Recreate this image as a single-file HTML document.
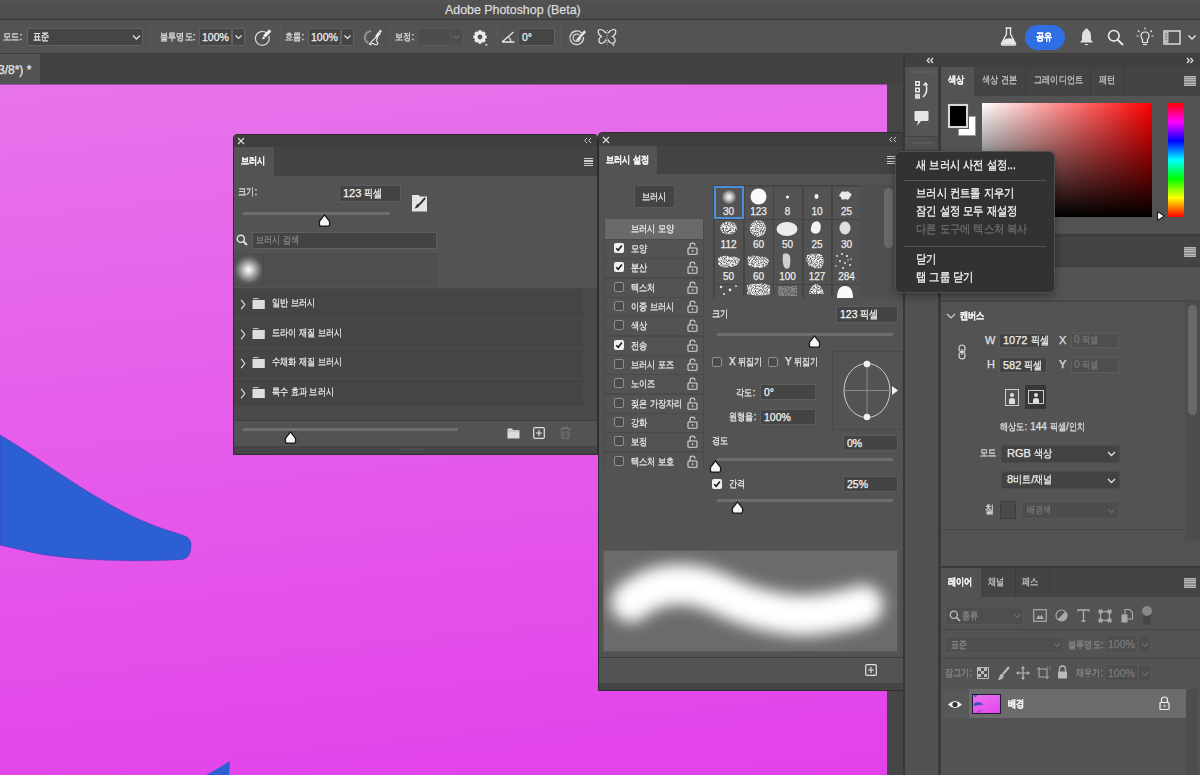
<!DOCTYPE html>
<html><head><meta charset="utf-8">
<style>
*{box-sizing:border-box;margin:0;padding:0}
html,body{width:1200px;height:775px;overflow:hidden;background:#424242;font-family:"Liberation Sans",sans-serif;color:#e6e6e6;font-size:11px}
.a{position:absolute}
.t{position:absolute;white-space:nowrap;line-height:1;-webkit-text-stroke:0.25px currentColor}
svg{position:absolute;overflow:visible}
i{font-style:normal;display:inline-block;transform:scaleX(0.82);transform-origin:0 50%;-webkit-text-stroke:0.25px currentColor}
.inp{position:absolute;background:#454545;border:1px solid #626262;border-radius:2px}
.sep{position:absolute;width:1px;background:#464646;border-right:1px solid #5a5a5a}
</style></head><body>
<!-- title bar -->
<div class="a" style="left:0;top:0;width:1200px;height:20px;background:linear-gradient(#535353,#4b4b4b)"></div>
<div class="t" style="left:445px;top:4px;font-size:12.4px;color:#dcdcdc">Adobe Photoshop (Beta)</div>
<div class="a" style="left:0;top:19px;width:1200px;height:1px;background:#3a3a3a"></div>
<!-- options bar -->
<div class="a" style="left:0;top:20px;width:1200px;height:34px;background:#535353"></div>
<div class="a" style="left:0;top:53px;width:1200px;height:1px;background:#3c3c3c"></div>
<div class="t" style="left:3px;top:32px;font-size:10px;color:#e0e0e0"><i style="margin-right:-3.60px">모드</i>:</div>
<div class="inp" style="left:27px;top:28px;width:116px;height:18px"></div>
<div class="t" style="left:33px;top:32px;font-size:10px;color:#f0f0f0"><i style="margin-right:-3.60px">표준</i></div>
<svg style="left:132px;top:34px" width="9" height="7" viewBox="0 0 9 7"><path d="M1 1.5 L4.5 5 L8 1.5" fill="none" stroke="#e0e0e0" stroke-width="1.3"/></svg>
<div class="sep" style="left:150px;top:24px;height:26px"></div>
<div class="t" style="left:160px;top:32px;font-size:10px;color:#e0e0e0"><i style="margin-right:-7.20px">불투명도</i>:</div>
<div class="inp" style="left:199px;top:28px;width:33px;height:18px"></div>
<div class="inp" style="left:232px;top:28px;width:13px;height:18px"></div>
<div class="t" style="left:202px;top:32px;font-size:10.5px;color:#f0f0f0">100%</div>
<svg style="left:234px;top:34px" width="9" height="7" viewBox="0 0 9 7"><path d="M1.5 1.5 L4.5 4.5 L7.5 1.5" fill="none" stroke="#e0e0e0" stroke-width="1.2"/></svg>
<svg style="left:254px;top:28px" width="20" height="20" viewBox="0 0 20 20"><path d="M12.4 4.8 A6.9 6.9 0 1 0 14.8 8" fill="none" stroke="#d4d4d4" stroke-width="1.25"/><path d="M10.2 8.6 L16.3 2.4" stroke="#f0f0f0" stroke-width="3"/><path d="M9 8.2 L11.2 10.4 L8.2 11.4 Z" fill="#f0f0f0"/></svg>
<div class="sep" style="left:280px;top:24px;height:26px"></div>
<div class="t" style="left:285px;top:32px;font-size:10px;color:#e0e0e0"><i style="margin-right:-3.60px">흐름</i>:</div>
<div class="inp" style="left:308px;top:28px;width:33px;height:18px"></div>
<div class="inp" style="left:341px;top:28px;width:13px;height:18px"></div>
<div class="t" style="left:311px;top:32px;font-size:10.5px;color:#f0f0f0">100%</div>
<svg style="left:343px;top:34px" width="9" height="7" viewBox="0 0 9 7"><path d="M1.5 1.5 L4.5 4.5 L7.5 1.5" fill="none" stroke="#e0e0e0" stroke-width="1.2"/></svg>
<svg style="left:362px;top:28px" width="22" height="20" viewBox="0 0 22 20"><path d="M8.3 3.2 Q3.2 4.6 2.8 9.3 Q2.8 12.8 5.6 14.6" fill="none" stroke="#8e8e8e" stroke-width="2.2" stroke-linecap="round"/><circle cx="18.3" cy="3.4" r="1.3" fill="#eee"/><path d="M17.6 4.6 L14.3 8.9" stroke="#eee" stroke-width="3"/><path d="M14.5 8.6 L7.6 15.6 Q7 16.8 8.6 16.6 L10.6 15.2 L13 16.6 Q15 17.1 16 15.6 L14.2 12.3 L15.5 10.5 Z" fill="none" stroke="#eee" stroke-width="1.1" stroke-linejoin="round"/></svg>
<div class="sep" style="left:390px;top:24px;height:26px"></div>
<div class="t" style="left:395px;top:32px;font-size:10px;color:#e0e0e0"><i style="margin-right:-3.60px">보정</i>:</div>
<div class="inp" style="left:417px;top:28px;width:46px;height:18px;background:#4d4d4d;border-color:#575757"></div>
<div class="a" style="left:450px;top:29px;width:1px;height:16px;background:#575757"></div>
<svg style="left:452px;top:34px" width="9" height="7" viewBox="0 0 9 7"><path d="M1.5 1.5 L4.5 4.5 L7.5 1.5" fill="none" stroke="#6a6a6a" stroke-width="1.2"/></svg>
<svg style="left:472px;top:29px" width="18" height="18" viewBox="0 0 18 18"><path d="M14.64 6.52 L14.64 9.48 L12.57 10.04 L12.67 9.79 L13.74 11.64 L11.64 13.74 L9.79 12.67 L10.04 12.57 L9.48 14.64 L6.52 14.64 L5.96 12.57 L6.21 12.67 L4.36 13.74 L2.26 11.64 L3.33 9.79 L3.43 10.04 L1.36 9.48 L1.36 6.52 L3.43 5.96 L3.33 6.21 L2.26 4.36 L4.36 2.26 L6.21 3.33 L5.96 3.43 L6.52 1.36 L9.48 1.36 L10.04 3.43 L9.79 3.33 L11.64 2.26 L13.74 4.36 L12.67 6.21 L12.57 5.96 Z M8 5.6 A2.4 2.4 0 1 0 8 10.4 A2.4 2.4 0 1 0 8 5.6 Z" fill="#ececec" fill-rule="evenodd"/><path d="M12.5 15.2 L16 15.2 L14.25 17 Z" fill="#e8e8e8"/></svg>
<div class="sep" style="left:497px;top:24px;height:26px"></div>
<svg style="left:501px;top:31px" width="15" height="12" viewBox="0 0 15 12"><path d="M1 11 H13.5 M1 11 L12.5 1" fill="none" stroke="#e8e8e8" stroke-width="1.3"/><path d="M7.5 5.8 Q10 8 10.2 11" fill="none" stroke="#e8e8e8" stroke-width="1.1"/></svg>
<div class="inp" style="left:518px;top:28px;width:37px;height:18px"></div>
<div class="t" style="left:522px;top:32px;font-size:10.5px;color:#f0f0f0">0°</div>
<div class="sep" style="left:560px;top:24px;height:26px"></div>
<svg style="left:568px;top:28px" width="20" height="20" viewBox="0 0 20 20"><path d="M13.8 5.2 A6.8 6.8 0 1 0 15.5 9" fill="none" stroke="#d8d8d8" stroke-width="1.3"/><path d="M11.5 7.3 A3.7 3.7 0 1 0 12.4 9.8" fill="none" stroke="#d8d8d8" stroke-width="1.2"/><path d="M8.6 11.2 L16.2 2.2 L18.2 4 L10.4 12.6 L8.3 13.2 Z" fill="#e6e6e6"/></svg>
<svg style="left:597px;top:28px" width="20" height="19" viewBox="0 0 20 19"><path d="M10 2 V17" stroke="#d0d0d0" stroke-width="1" stroke-dasharray="1.2 1.2"/><path d="M9 5 Q6 1.5 3 1.5 Q1 1.5 1.2 4 Q1.5 7 4.5 8.5 Q1.5 10 2 13.5 Q3 16 6 15 Q8.5 13.5 9 11.5" fill="none" stroke="#e6e6e6" stroke-width="1.2"/><path d="M11 5 Q14 1.5 17 1.5 Q19 1.5 18.8 4 Q18.5 7 15.5 8.5 Q18.5 10 18 13.5 Q17 16 14 15 Q11.5 13.5 11 11.5" fill="none" stroke="#e6e6e6" stroke-width="1.2"/><path d="M15 16.5 L18 16.5 L16.5 18.3 Z" fill="#e6e6e6"/></svg>
<!-- right side -->
<svg style="left:1000px;top:27px" width="17" height="19" viewBox="0 0 17 19"><path d="M5.5 1 H11.5 M6.5 1 V7 L1.5 16.5 Q1 18 2.5 18 H14.5 Q16 18 15.5 16.5 L10.5 7 V1" fill="none" stroke="#e8e8e8" stroke-width="1.3"/><path d="M3.5 13 Q8 10 13 12 L15 16.5 Q15.3 17.3 14.5 17.3 H2.5 Q1.7 17.3 2 16.5 Z" fill="#e8e8e8"/></svg>
<div class="a" style="left:1025px;top:25px;width:40px;height:25px;background:#2f6fe3;border-radius:13px"></div>
<div class="t" style="left:1036px;top:32px;font-size:10px;color:#fff;font-weight:bold"><i style="margin-right:-3.60px">공유</i></div>
<svg style="left:1079px;top:28px" width="15" height="19" viewBox="0 0 15 19"><path d="M7.5 1.5 Q12 2 12 8 V12 L14 14.5 H1 L3 12 V8 Q3 2 7.5 1.5 Z" fill="#e0e0e0"/><rect x="6.2" y="0.5" width="2.6" height="2" rx="1" fill="#e0e0e0"/><path d="M5.5 16 Q7.5 18.5 9.5 16 Z" fill="#e0e0e0"/></svg>
<svg style="left:1107px;top:29px" width="17" height="17" viewBox="0 0 17 17"><circle cx="6.8" cy="6.8" r="5.3" fill="none" stroke="#ececec" stroke-width="1.6"/><path d="M10.8 10.8 L15.5 15.5" stroke="#ececec" stroke-width="1.9" stroke-linecap="round"/></svg>
<svg style="left:1136px;top:27px" width="18" height="20" viewBox="0 0 18 20"><path d="M9 5 Q13 5 13 9 Q13 11 11.5 12.5 V15.5 H6.5 V12.5 Q5 11 5 9 Q5 5 9 5 Z" fill="none" stroke="#e8e8e8" stroke-width="1.2"/><path d="M7 17.5 H11" stroke="#e8e8e8" stroke-width="1.2"/><path d="M9 0.5 V2.5 M2 3.5 L3.5 5 M16 3.5 L14.5 5 M0.5 9 H2.5 M15.5 9 H17.5" stroke="#e8e8e8" stroke-width="1.2"/></svg>
<svg style="left:1163px;top:30px" width="18" height="15" viewBox="0 0 18 15"><rect x="1" y="1" width="16" height="13" fill="none" stroke="#e6e6e6" stroke-width="1.4"/><rect x="1" y="1" width="4.5" height="13" fill="#bdbdbd"/><path d="M2.5 4 H4 M2.5 6.5 H4 M2.5 9 H4" stroke="#555" stroke-width="1"/></svg>
<svg style="left:1187px;top:34px" width="10" height="7" viewBox="0 0 10 7"><path d="M1.5 1.5 L5 5 L8.5 1.5" fill="none" stroke="#e6e6e6" stroke-width="1.3"/></svg>
<!-- tab bar -->
<div class="a" style="left:0;top:54px;width:904px;height:30px;background:#424242"></div>
<div class="a" style="left:0;top:54px;width:40px;height:30px;background:#535353"></div>
<div class="t" style="left:-2px;top:64px;font-size:12px;color:#e8e8e8">3/8*) *</div>
<!-- canvas -->
<div class="a" style="left:0;top:84px;width:887px;height:691px;background:linear-gradient(174deg,#e773eb 0%,#e55bea 50%,#e241ea 100%);border-top:1px solid #9a4aa0"></div>
<svg style="left:0;top:84px" width="887" height="691" viewBox="0 84 887 691">
<path d="M0 435 C40 458 95 502 150 524 C168 531 177 533 182 535 Q191 537.5 191 545 Q191 558 182 559.5 C140 562 70 561 30 552 C18 549 8 547 0 545 Z" fill="#2c60d2" stroke="#4338bc" stroke-width="1" stroke-opacity="0.55"/>
<path d="M206 775 C214 771 222 766 230 761 C230 766 229 771 229 775 Z" fill="#2e5fd4"/>
</svg>
<div class="a" style="left:887px;top:84px;width:16px;height:691px;background:#464646"></div>


<!-- brush panel -->
<div class="a" style="left:233px;top:134px;width:365px;height:321px;background:#535353;border:1px solid #2e2e2e;border-radius:4px 4px 0 0"></div>
<div class="a" style="left:234px;top:135px;width:363px;height:12px;background:#3e3e3e;border-radius:3px 3px 0 0"></div>
<svg style="left:237px;top:137px" width="8" height="8" viewBox="0 0 8 8"><path d="M1 1 L7 7 M7 1 L1 7" stroke="#d8d8d8" stroke-width="1.3"/></svg>
<svg style="left:583px;top:137px" width="9" height="7" viewBox="0 0 9 7"><path d="M4 1 L1.5 3.5 L4 6 M8 1 L5.5 3.5 L8 6" fill="none" stroke="#cfcfcf" stroke-width="1"/></svg>
<div class="a" style="left:234px;top:147px;width:363px;height:29px;background:#434343"></div>
<div class="a" style="left:234px;top:147px;width:40px;height:29px;background:#535353"></div>
<div class="t" style="left:241px;top:156px;font-size:10px;color:#f0f0f0;font-weight:bold"><i style="margin-right:-5.40px">브러시</i></div>
<div class="a" style="left:584px;top:158px;width:9px;height:8px;background:repeating-linear-gradient(#cfcfcf 0 1.2px,transparent 1.2px 2.3px)"></div>
<div class="t" style="left:238px;top:187px;font-size:10px;color:#e0e0e0"><i style="margin-right:-3.60px">크기</i>:</div>
<div class="inp" style="left:339px;top:185px;width:62px;height:17px;background:#444;border-color:#5c5c5c;border-radius:0"></div>
<div class="t" style="left:343px;top:188px;font-size:11px;color:#f4f4f4">123 <i style="margin-right:-3.96px">픽셀</i></div>
<svg style="left:411px;top:194px" width="17" height="18" viewBox="0 0 17 18"><path d="M1 1 H8 L8.8 2.5 H16 V17.5 H1 Z" fill="#e4e4e4"/><path d="M13.6 4.6 L9 9.8" stroke="#333" stroke-width="2" stroke-linecap="round"/><path d="M8.3 9.6 Q6.2 9.6 5.2 11.6 Q4.6 13 3.6 14.6 Q6.8 14.2 8 12.6 Q9.3 11 8.3 9.6 Z" fill="#333"/></svg>
<div class="a" style="left:243px;top:212px;width:147px;height:3px;background:#6e6e6e;border-radius:1px"></div>
<svg style="left:318px;top:214px" width="13" height="13" viewBox="0 0 13 13"><path d="M6.5 0.9 L11.6 7.4 V10.4 Q11.6 12.1 10 12.1 H3 Q1.4 12.1 1.4 10.4 V7.4 Z" fill="#f6f6f6" stroke="#1a1a1a" stroke-width="1.35" stroke-linejoin="round"/></svg>
<svg style="left:236px;top:234px" width="12" height="12" viewBox="0 0 12 12"><circle cx="4.8" cy="4.8" r="3.6" fill="none" stroke="#e6e6e6" stroke-width="1.4"/><path d="M7.5 7.5 L11 11" stroke="#e6e6e6" stroke-width="1.8"/></svg>
<div class="a" style="left:252px;top:232px;width:185px;height:17px;background:#434343;border:1px solid #5f5f5f"></div>
<div class="t" style="left:256px;top:235px;font-size:10px;color:#8a8a8a"><i style="margin-right:-9.50px">브러시 검색</i></div>
<div class="a" style="left:234px;top:253px;width:203px;height:34px;background:#4e4e4e"></div>
<div class="a" style="left:234px;top:254px;width:29px;height:32px;background:radial-gradient(circle at 50% 50%,#fff 0,#ddd 3px,#999 8px,#5a5a5a 13px,#4e4e4e 16px)"></div>
<div class="a" style="left:263px;top:254px;width:1px;height:32px;background:#474747"></div>
<div class="a" style="left:234px;top:288px;width:363px;height:133px;background:#4a4a4a"></div>
<div class="a" style="left:234px;top:289px;width:349px;height:117px;background:#454545"></div>
<div class="a" style="left:234px;top:318px;width:349px;height:1px;background:#4e4e4e"></div>
<div class="a" style="left:234px;top:348px;width:349px;height:1px;background:#4e4e4e"></div>
<div class="a" style="left:234px;top:378px;width:349px;height:1px;background:#4e4e4e"></div>
<svg style="left:240px;top:299px" width="6" height="11" viewBox="0 0 6 11"><path d="M1.2 0.8 L4.8 5.5 L1.2 10.2" fill="none" stroke="#dedede" stroke-width="1.2"/></svg><svg style="left:252px;top:298px" width="13" height="11" viewBox="0 0 13 11"><path d="M1 0.6 H6.5" stroke="#cfcfcf" stroke-width="1"/><rect x="0.5" y="2" width="12.3" height="9" fill="#dedede"/></svg>
<div class="t" style="left:272px;top:298px;font-size:10px;color:#ececec"><i style="margin-right:-9.50px">일반 브러시</i></div>
<svg style="left:240px;top:329px" width="6" height="11" viewBox="0 0 6 11"><path d="M1.2 0.8 L4.8 5.5 L1.2 10.2" fill="none" stroke="#dedede" stroke-width="1.2"/></svg><svg style="left:252px;top:328px" width="13" height="11" viewBox="0 0 13 11"><path d="M1 0.6 H6.5" stroke="#cfcfcf" stroke-width="1"/><rect x="0.5" y="2" width="12.3" height="9" fill="#dedede"/></svg>
<div class="t" style="left:272px;top:328px;font-size:10px;color:#ececec"><i style="margin-right:-15.40px">드라이 재질 브러시</i></div>
<svg style="left:240px;top:358px" width="6" height="11" viewBox="0 0 6 11"><path d="M1.2 0.8 L4.8 5.5 L1.2 10.2" fill="none" stroke="#dedede" stroke-width="1.2"/></svg><svg style="left:252px;top:357px" width="13" height="11" viewBox="0 0 13 11"><path d="M1 0.6 H6.5" stroke="#cfcfcf" stroke-width="1"/><rect x="0.5" y="2" width="12.3" height="9" fill="#dedede"/></svg>
<div class="t" style="left:272px;top:357px;font-size:10px;color:#ececec"><i style="margin-right:-15.40px">수채화 재질 브러시</i></div>
<svg style="left:240px;top:388px" width="6" height="11" viewBox="0 0 6 11"><path d="M1.2 0.8 L4.8 5.5 L1.2 10.2" fill="none" stroke="#dedede" stroke-width="1.2"/></svg><svg style="left:252px;top:387px" width="13" height="11" viewBox="0 0 13 11"><path d="M1 0.6 H6.5" stroke="#cfcfcf" stroke-width="1"/><rect x="0.5" y="2" width="12.3" height="9" fill="#dedede"/></svg>
<div class="t" style="left:272px;top:387px;font-size:10px;color:#ececec"><i style="margin-right:-13.60px">특수 효과 브러시</i></div>
<div class="a" style="left:234px;top:420px;width:363px;height:1px;background:#3e3e3e"></div>
<div class="a" style="left:234px;top:421px;width:363px;height:25px;background:#535353"></div>
<div class="a" style="left:243px;top:428px;width:215px;height:3px;background:#6e6e6e;border-radius:1px"></div>
<svg style="left:284px;top:431px" width="13" height="13" viewBox="0 0 13 13"><path d="M6.5 0.9 L11.6 7.4 V10.4 Q11.6 12.1 10 12.1 H3 Q1.4 12.1 1.4 10.4 V7.4 Z" fill="#f6f6f6" stroke="#1a1a1a" stroke-width="1.35" stroke-linejoin="round"/></svg>
<svg style="left:507px;top:428px" width="13" height="11" viewBox="0 0 13 11"><path d="M0.5 1.5 Q0.5 0.5 1.5 0.5 H5 L6 2 H11.5 Q12.5 2 12.5 3 V10.5 H0.5 Z" fill="#dcdcdc"/><path d="M0.5 3 H12.5" stroke="#9a9a9a" stroke-width="0.6"/></svg>
<svg style="left:533px;top:427px" width="12" height="12" viewBox="0 0 12 12"><rect x="0.7" y="0.7" width="10.6" height="10.6" rx="1" fill="none" stroke="#e0e0e0" stroke-width="1.2"/><path d="M6 3 V9 M3 6 H9" stroke="#e0e0e0" stroke-width="1.2"/></svg>
<svg style="left:560px;top:426px" width="11" height="13" viewBox="0 0 11 13"><path d="M0.5 2.5 H10.5 M3.5 2.5 V1 H7.5 V2.5 M1.5 3 L2.2 12.3 H8.8 L9.5 3" fill="none" stroke="#777" stroke-width="1"/><path d="M4 5 V10.5 M7 5 V10.5" stroke="#777" stroke-width="0.8"/></svg>
<div class="a" style="left:234px;top:446px;width:363px;height:8px;background:#454545"></div>
<div class="a" style="left:400px;top:448px;width:24px;height:3px;background:repeating-linear-gradient(90deg,#555 0 1px,#454545 1px 2px)"></div>


<!-- brush settings panel -->
<div class="a" style="left:598px;top:132px;width:306px;height:559px;background:#535353;border:1px solid #2e2e2e;border-radius:4px 4px 0 0"></div>
<div class="a" style="left:599px;top:133px;width:304px;height:13px;background:#3e3e3e;border-radius:3px 3px 0 0"></div>
<svg style="left:602px;top:136px" width="8" height="8" viewBox="0 0 8 8"><path d="M1 1 L7 7 M7 1 L1 7" stroke="#d8d8d8" stroke-width="1.3"/></svg>
<svg style="left:888px;top:136px" width="9" height="7" viewBox="0 0 9 7"><path d="M4 1 L1.5 3.5 L4 6 M8 1 L5.5 3.5 L8 6" fill="none" stroke="#cfcfcf" stroke-width="1"/></svg>
<div class="a" style="left:599px;top:146px;width:304px;height:28px;background:#434343"></div>
<div class="a" style="left:599px;top:146px;width:58px;height:28px;background:#535353"></div>
<div class="t" style="left:606px;top:155px;font-size:10px;color:#f0f0f0;font-weight:bold"><i style="margin-right:-9.50px">브러시 설정</i></div>
<div class="a" style="left:887px;top:156px;width:9px;height:8px;background:repeating-linear-gradient(#cfcfcf 0 1.2px,transparent 1.2px 2.3px)"></div>
<div class="a" style="left:634px;top:185px;width:41px;height:23px;background:#444;border:1px solid #5a5a5a;border-radius:1px"></div>
<div class="t" style="left:642px;top:192px;font-size:10px;color:#f0f0f0"><i style="margin-right:-5.40px">브러시</i></div>
<div class="a" style="left:604px;top:219px;width:100px;height:250px;background:#4a4a4a"></div>
<div class="a" style="left:605px;top:219px;width:98px;height:20px;background:#6a6a6a"></div>
<div class="t" style="left:631px;top:224px;font-size:10px;color:#f0f0f0"><i style="margin-right:-9.50px">브러시 모양</i></div>
<div class="a" style="left:605px;top:240px;width:98px;height:18px;background:#535353"></div>
<div class="a" style="left:614px;top:243px;width:10px;height:10px;background:#f0f0f0;border-radius:2px"></div><svg style="left:614px;top:243px" width="10" height="10" viewBox="0 0 10 10"><path d="M2.2 5.2 L4.2 7.3 L7.9 2.6" fill="none" stroke="#1a1a1a" stroke-width="1.6"/></svg>
<div class="t" style="left:631px;top:244px;font-size:10px;color:#ececec"><i style="margin-right:-3.60px">모양</i></div>
<svg style="left:687px;top:242px" width="11" height="13" viewBox="0 0 11 13"><path d="M3 6 V3.5 Q3 1 5.5 1 Q8 1 8 3.5" fill="none" stroke="#d8d8d8" stroke-width="1.1"/><rect x="1" y="6" width="9" height="6.3" rx="0.8" fill="none" stroke="#d8d8d8" stroke-width="1.1"/><rect x="4.8" y="8.3" width="1.5" height="1.6" fill="#d8d8d8"/></svg>
<div class="a" style="left:605px;top:259px;width:98px;height:18px;background:#535353"></div>
<div class="a" style="left:614px;top:262px;width:10px;height:10px;background:#f0f0f0;border-radius:2px"></div><svg style="left:614px;top:262px" width="10" height="10" viewBox="0 0 10 10"><path d="M2.2 5.2 L4.2 7.3 L7.9 2.6" fill="none" stroke="#1a1a1a" stroke-width="1.6"/></svg>
<div class="t" style="left:631px;top:263px;font-size:10px;color:#ececec"><i style="margin-right:-3.60px">분산</i></div>
<svg style="left:687px;top:261px" width="11" height="13" viewBox="0 0 11 13"><path d="M3 6 V3.5 Q3 1 5.5 1 Q8 1 8 3.5" fill="none" stroke="#d8d8d8" stroke-width="1.1"/><rect x="1" y="6" width="9" height="6.3" rx="0.8" fill="none" stroke="#d8d8d8" stroke-width="1.1"/><rect x="4.8" y="8.3" width="1.5" height="1.6" fill="#d8d8d8"/></svg>
<div class="a" style="left:605px;top:279px;width:98px;height:18px;background:#535353"></div>
<div class="a" style="left:614px;top:282px;width:10px;height:10px;background:#4a4a4a;border:1px solid #909090;border-radius:2px"></div>
<div class="t" style="left:631px;top:283px;font-size:10px;color:#ececec"><i style="margin-right:-5.40px">텍스처</i></div>
<svg style="left:687px;top:281px" width="11" height="13" viewBox="0 0 11 13"><path d="M3 6 V3.5 Q3 1 5.5 1 Q8 1 8 3.5" fill="none" stroke="#d8d8d8" stroke-width="1.1"/><rect x="1" y="6" width="9" height="6.3" rx="0.8" fill="none" stroke="#d8d8d8" stroke-width="1.1"/><rect x="4.8" y="8.3" width="1.5" height="1.6" fill="#d8d8d8"/></svg>
<div class="a" style="left:605px;top:298px;width:98px;height:18px;background:#535353"></div>
<div class="a" style="left:614px;top:301px;width:10px;height:10px;background:#4a4a4a;border:1px solid #909090;border-radius:2px"></div>
<div class="t" style="left:631px;top:302px;font-size:10px;color:#ececec"><i style="margin-right:-9.50px">이중 브러시</i></div>
<svg style="left:687px;top:300px" width="11" height="13" viewBox="0 0 11 13"><path d="M3 6 V3.5 Q3 1 5.5 1 Q8 1 8 3.5" fill="none" stroke="#d8d8d8" stroke-width="1.1"/><rect x="1" y="6" width="9" height="6.3" rx="0.8" fill="none" stroke="#d8d8d8" stroke-width="1.1"/><rect x="4.8" y="8.3" width="1.5" height="1.6" fill="#d8d8d8"/></svg>
<div class="a" style="left:605px;top:317px;width:98px;height:18px;background:#535353"></div>
<div class="a" style="left:614px;top:320px;width:10px;height:10px;background:#4a4a4a;border:1px solid #909090;border-radius:2px"></div>
<div class="t" style="left:631px;top:321px;font-size:10px;color:#ececec"><i style="margin-right:-3.60px">색상</i></div>
<svg style="left:687px;top:319px" width="11" height="13" viewBox="0 0 11 13"><path d="M3 6 V3.5 Q3 1 5.5 1 Q8 1 8 3.5" fill="none" stroke="#d8d8d8" stroke-width="1.1"/><rect x="1" y="6" width="9" height="6.3" rx="0.8" fill="none" stroke="#d8d8d8" stroke-width="1.1"/><rect x="4.8" y="8.3" width="1.5" height="1.6" fill="#d8d8d8"/></svg>
<div class="a" style="left:605px;top:337px;width:98px;height:18px;background:#535353"></div>
<div class="a" style="left:614px;top:340px;width:10px;height:10px;background:#f0f0f0;border-radius:2px"></div><svg style="left:614px;top:340px" width="10" height="10" viewBox="0 0 10 10"><path d="M2.2 5.2 L4.2 7.3 L7.9 2.6" fill="none" stroke="#1a1a1a" stroke-width="1.6"/></svg>
<div class="t" style="left:631px;top:341px;font-size:10px;color:#ececec"><i style="margin-right:-3.60px">전송</i></div>
<svg style="left:687px;top:339px" width="11" height="13" viewBox="0 0 11 13"><path d="M3 6 V3.5 Q3 1 5.5 1 Q8 1 8 3.5" fill="none" stroke="#d8d8d8" stroke-width="1.1"/><rect x="1" y="6" width="9" height="6.3" rx="0.8" fill="none" stroke="#d8d8d8" stroke-width="1.1"/><rect x="4.8" y="8.3" width="1.5" height="1.6" fill="#d8d8d8"/></svg>
<div class="a" style="left:605px;top:356px;width:98px;height:18px;background:#535353"></div>
<div class="a" style="left:614px;top:359px;width:10px;height:10px;background:#4a4a4a;border:1px solid #909090;border-radius:2px"></div>
<div class="t" style="left:631px;top:360px;font-size:10px;color:#ececec"><i style="margin-right:-9.50px">브러시 포즈</i></div>
<svg style="left:687px;top:358px" width="11" height="13" viewBox="0 0 11 13"><path d="M3 6 V3.5 Q3 1 5.5 1 Q8 1 8 3.5" fill="none" stroke="#d8d8d8" stroke-width="1.1"/><rect x="1" y="6" width="9" height="6.3" rx="0.8" fill="none" stroke="#d8d8d8" stroke-width="1.1"/><rect x="4.8" y="8.3" width="1.5" height="1.6" fill="#d8d8d8"/></svg>
<div class="a" style="left:605px;top:375px;width:98px;height:18px;background:#535353"></div>
<div class="a" style="left:614px;top:378px;width:10px;height:10px;background:#4a4a4a;border:1px solid #909090;border-radius:2px"></div>
<div class="t" style="left:631px;top:379px;font-size:10px;color:#ececec"><i style="margin-right:-5.40px">노이즈</i></div>
<svg style="left:687px;top:377px" width="11" height="13" viewBox="0 0 11 13"><path d="M3 6 V3.5 Q3 1 5.5 1 Q8 1 8 3.5" fill="none" stroke="#d8d8d8" stroke-width="1.1"/><rect x="1" y="6" width="9" height="6.3" rx="0.8" fill="none" stroke="#d8d8d8" stroke-width="1.1"/><rect x="4.8" y="8.3" width="1.5" height="1.6" fill="#d8d8d8"/></svg>
<div class="a" style="left:605px;top:395px;width:98px;height:18px;background:#535353"></div>
<div class="a" style="left:614px;top:398px;width:10px;height:10px;background:#4a4a4a;border:1px solid #909090;border-radius:2px"></div>
<div class="t" style="left:631px;top:399px;font-size:10px;color:#ececec"><i style="margin-right:-11.30px">젖은 가장자리</i></div>
<svg style="left:687px;top:397px" width="11" height="13" viewBox="0 0 11 13"><path d="M3 6 V3.5 Q3 1 5.5 1 Q8 1 8 3.5" fill="none" stroke="#d8d8d8" stroke-width="1.1"/><rect x="1" y="6" width="9" height="6.3" rx="0.8" fill="none" stroke="#d8d8d8" stroke-width="1.1"/><rect x="4.8" y="8.3" width="1.5" height="1.6" fill="#d8d8d8"/></svg>
<div class="a" style="left:605px;top:414px;width:98px;height:18px;background:#535353"></div>
<div class="a" style="left:614px;top:417px;width:10px;height:10px;background:#4a4a4a;border:1px solid #909090;border-radius:2px"></div>
<div class="t" style="left:631px;top:418px;font-size:10px;color:#ececec"><i style="margin-right:-3.60px">강화</i></div>
<svg style="left:687px;top:416px" width="11" height="13" viewBox="0 0 11 13"><path d="M3 6 V3.5 Q3 1 5.5 1 Q8 1 8 3.5" fill="none" stroke="#d8d8d8" stroke-width="1.1"/><rect x="1" y="6" width="9" height="6.3" rx="0.8" fill="none" stroke="#d8d8d8" stroke-width="1.1"/><rect x="4.8" y="8.3" width="1.5" height="1.6" fill="#d8d8d8"/></svg>
<div class="a" style="left:605px;top:433px;width:98px;height:18px;background:#535353"></div>
<div class="a" style="left:614px;top:436px;width:10px;height:10px;background:#4a4a4a;border:1px solid #909090;border-radius:2px"></div>
<div class="t" style="left:631px;top:437px;font-size:10px;color:#ececec"><i style="margin-right:-3.60px">보정</i></div>
<svg style="left:687px;top:435px" width="11" height="13" viewBox="0 0 11 13"><path d="M3 6 V3.5 Q3 1 5.5 1 Q8 1 8 3.5" fill="none" stroke="#d8d8d8" stroke-width="1.1"/><rect x="1" y="6" width="9" height="6.3" rx="0.8" fill="none" stroke="#d8d8d8" stroke-width="1.1"/><rect x="4.8" y="8.3" width="1.5" height="1.6" fill="#d8d8d8"/></svg>
<div class="a" style="left:605px;top:453px;width:98px;height:18px;background:#535353"></div>
<div class="a" style="left:614px;top:456px;width:10px;height:10px;background:#4a4a4a;border:1px solid #909090;border-radius:2px"></div>
<div class="t" style="left:631px;top:457px;font-size:10px;color:#ececec"><i style="margin-right:-9.50px">텍스처 보호</i></div>
<svg style="left:687px;top:455px" width="11" height="13" viewBox="0 0 11 13"><path d="M3 6 V3.5 Q3 1 5.5 1 Q8 1 8 3.5" fill="none" stroke="#d8d8d8" stroke-width="1.1"/><rect x="1" y="6" width="9" height="6.3" rx="0.8" fill="none" stroke="#d8d8d8" stroke-width="1.1"/><rect x="4.8" y="8.3" width="1.5" height="1.6" fill="#d8d8d8"/></svg>
<div class="a" style="left:713px;top:185px;width:147px;height:113px;background:#454545"></div>
<div class="a" style="left:860px;top:185px;width:34px;height:113px;background:#4f4f4f"></div>
<div class="a" style="left:884px;top:188px;width:9px;height:60px;background:#6a6a6a;border-radius:5px"></div>
<div class="a" style="left:715px;top:187px;width:27.5px;height:31.5px;background:#535353"></div>
<div class="a" style="left:745px;top:187px;width:27.5px;height:31.5px;background:#535353"></div>
<div class="a" style="left:774px;top:187px;width:27.5px;height:31.5px;background:#535353"></div>
<div class="a" style="left:803.5px;top:187px;width:27.5px;height:31.5px;background:#535353"></div>
<div class="a" style="left:833px;top:187px;width:27.5px;height:31.5px;background:#535353"></div>
<div class="a" style="left:715px;top:220px;width:27.5px;height:31.5px;background:#535353"></div>
<div class="a" style="left:745px;top:220px;width:27.5px;height:31.5px;background:#535353"></div>
<div class="a" style="left:774px;top:220px;width:27.5px;height:31.5px;background:#535353"></div>
<div class="a" style="left:803.5px;top:220px;width:27.5px;height:31.5px;background:#535353"></div>
<div class="a" style="left:833px;top:220px;width:27.5px;height:31.5px;background:#535353"></div>
<div class="a" style="left:715px;top:252px;width:27.5px;height:31.5px;background:#535353"></div>
<div class="a" style="left:745px;top:252px;width:27.5px;height:31.5px;background:#535353"></div>
<div class="a" style="left:774px;top:252px;width:27.5px;height:31.5px;background:#535353"></div>
<div class="a" style="left:803.5px;top:252px;width:27.5px;height:31.5px;background:#535353"></div>
<div class="a" style="left:833px;top:252px;width:27.5px;height:31.5px;background:#535353"></div>
<div class="a" style="left:715px;top:284.5px;width:27.5px;height:14px;background:#535353"></div>
<div class="a" style="left:745px;top:284.5px;width:27.5px;height:14px;background:#535353"></div>
<div class="a" style="left:774px;top:284.5px;width:27.5px;height:14px;background:#535353"></div>
<div class="a" style="left:803.5px;top:284.5px;width:27.5px;height:14px;background:#535353"></div>
<div class="a" style="left:833px;top:284.5px;width:27.5px;height:14px;background:#535353"></div>
<div class="t" style="left:713.6px;width:30px;text-align:center;top:207px;font-size:10px;color:#ececec">30</div>
<div class="t" style="left:743.6px;width:30px;text-align:center;top:207px;font-size:10px;color:#ececec">123</div>
<div class="t" style="left:772.6px;width:30px;text-align:center;top:207px;font-size:10px;color:#ececec">8</div>
<div class="t" style="left:802.1px;width:30px;text-align:center;top:207px;font-size:10px;color:#ececec">10</div>
<div class="t" style="left:831.6px;width:30px;text-align:center;top:207px;font-size:10px;color:#ececec">25</div>
<div class="t" style="left:713.6px;width:30px;text-align:center;top:240px;font-size:10px;color:#ececec">112</div>
<div class="t" style="left:743.6px;width:30px;text-align:center;top:240px;font-size:10px;color:#ececec">60</div>
<div class="t" style="left:772.6px;width:30px;text-align:center;top:240px;font-size:10px;color:#ececec">50</div>
<div class="t" style="left:802.1px;width:30px;text-align:center;top:240px;font-size:10px;color:#ececec">25</div>
<div class="t" style="left:831.6px;width:30px;text-align:center;top:240px;font-size:10px;color:#ececec">30</div>
<div class="t" style="left:713.6px;width:30px;text-align:center;top:272px;font-size:10px;color:#ececec">50</div>
<div class="t" style="left:743.6px;width:30px;text-align:center;top:272px;font-size:10px;color:#ececec">60</div>
<div class="t" style="left:772.6px;width:30px;text-align:center;top:272px;font-size:10px;color:#ececec">100</div>
<div class="t" style="left:802.1px;width:30px;text-align:center;top:272px;font-size:10px;color:#ececec">127</div>
<div class="t" style="left:831.6px;width:30px;text-align:center;top:272px;font-size:10px;color:#ececec">284</div>
<div class="a" style="left:714px;top:186px;width:30px;height:33px;border:2px solid #4b8fdc"></div>
<svg style="left:714px;top:186px" width="146" height="112" viewBox="0 0 146 112">
<defs><radialGradient id="sr"><stop offset="0" stop-color="#fff"/><stop offset="0.5" stop-color="#bbb"/><stop offset="1" stop-color="#535353"/></radialGradient>
<filter id="bl1"><feGaussianBlur stdDeviation="0.6"/></filter>
<filter id="tx" x="0" y="0" width="100%" height="100%" filterUnits="userSpaceOnUse"><feTurbulence type="fractalNoise" baseFrequency="0.75" numOctaves="2" seed="3" result="n"/><feColorMatrix in="n" type="matrix" values="0 0 0 0 1  0 0 0 0 1  0 0 0 0 1  0 0 0 -2.6 1.9" result="m"/><feComposite in="m" in2="SourceAlpha" operator="in"/></filter>
</defs>
<circle cx="15" cy="11" r="7.5" fill="url(#sr)"/>
<circle cx="44.5" cy="10.5" r="8" fill="#fafafa"/>
<circle cx="73.5" cy="11" r="1.6" fill="#f0f0f0"/>
<ellipse cx="102.5" cy="10.5" rx="2" ry="2.4" fill="#f0f0f0"/>
<g fill="#e8e8e8" filter="url(#bl1)"><path d="M126 8 Q128 4 131 6 Q134 4 136 7 Q139 8 136 11 Q135 15 131 13 Q127 15 127 11 Q124 10 126 8 Z"/></g>
<g filter="url(#tx)">
<ellipse cx="14.5" cy="42" rx="8.5" ry="6.5" fill="#fff"/>
<circle cx="44" cy="42.5" r="8.2" fill="#fff"/>
<path d="M4 72 Q10 68 16 71 Q23 69 26 74 Q24 81 16 81 Q8 83 4 78 Z" fill="#fff"/>
<path d="M33 71 Q40 68 46 71 Q53 70 55 75 Q53 82 45 82 Q37 82 34 78 Z" fill="#fff"/>
<path d="M93 69 Q101 66 108 69 Q112 76 107 82 Q100 83 95 80 Q91 75 93 69 Z" fill="#fff"/>
<path d="M33 99 Q45 96 56 99 V108 Q45 111 33 108 Z" fill="#fff"/>
<path d="M64 100 H83 V110 H64 Z" fill="#fff" opacity="0.35"/>
<path d="M95 108 Q96 99 102 98 Q108 99 110 108 Z" fill="#fff"/>
</g>
<g filter="url(#bl1)">
<ellipse cx="73" cy="43" rx="10.5" ry="7" fill="#ececec"/>
<path d="M98 38 Q101 34 105 36 Q108 39 106 45 Q104 49 99 47 Q96 45 97 42 Z" fill="#f4f4f4"/>
<ellipse cx="131" cy="42" rx="5.5" ry="6.5" fill="#e0e0e0"/>
<path d="M69 68 Q74 66 76 70 Q77 78 75 82 Q72 84 70 81 Q68 76 69 68 Z" fill="#cfcfcf"/>
</g>
<g fill="#e6e6e6"><circle cx="123" cy="70" r="0.9"/><circle cx="128" cy="68" r="1"/><circle cx="133" cy="70" r="1.1"/><circle cx="137" cy="73" r="0.8"/><circle cx="126" cy="75" r="1"/><circle cx="131" cy="77" r="0.9"/><circle cx="136" cy="79" r="1"/><circle cx="122" cy="80" r="0.8"/><circle cx="129" cy="82" r="1"/><circle cx="134" cy="74" r="0.7"/><circle cx="7" cy="101" r="1.2"/><circle cx="16" cy="104" r="1.4"/><circle cx="22" cy="100" r="0.9"/><circle cx="10" cy="108" r="1"/></g>
<path d="M123 112 Q123 100 131 100 Q139 100 139 112 Z" fill="#fafafa"/>
</svg>
<div class="t" style="left:712px;top:309px;font-size:10px;color:#ececec"><i style="margin-right:-3.60px">크기</i></div>
<div class="inp" style="left:836px;top:306px;width:62px;height:17px;background:#444;border-color:#5c5c5c;border-radius:0"></div>
<div class="t" style="left:840px;top:309px;font-size:10.5px;color:#f4f4f4">123 <i style="margin-right:-3.78px">픽셀</i></div>
<div class="a" style="left:717px;top:333px;width:176px;height:3px;background:#6e6e6e;border-radius:1px"></div>
<svg style="left:808px;top:335px" width="13" height="13" viewBox="0 0 13 13"><path d="M6.5 0.9 L11.6 7.4 V10.4 Q11.6 12.1 10 12.1 H3 Q1.4 12.1 1.4 10.4 V7.4 Z" fill="#f6f6f6" stroke="#1a1a1a" stroke-width="1.35" stroke-linejoin="round"/></svg>
<div class="a" style="left:712px;top:357px;width:10px;height:10px;background:#4a4a4a;border:1px solid #909090;border-radius:2px"></div>
<div class="t" style="left:729px;top:357px;font-size:10px;color:#ececec">X <i style="margin-right:-5.40px">뒤집기</i></div>
<div class="a" style="left:768px;top:357px;width:10px;height:10px;background:#4a4a4a;border:1px solid #909090;border-radius:2px"></div>
<div class="t" style="left:785px;top:357px;font-size:10px;color:#ececec">Y <i style="margin-right:-5.40px">뒤집기</i></div>
<div class="a" style="left:832px;top:351px;width:71px;height:79px;border:1px solid #4a4a4a"></div>
<svg style="left:832px;top:351px" width="71" height="79" viewBox="0 0 71 79"><ellipse cx="35" cy="39.5" rx="23" ry="27" fill="none" stroke="#cfcfcf" stroke-width="1"/><path d="M35 12.5 V66.5 M12 39.5 H58" stroke="#8a8a8a" stroke-width="1"/><circle cx="35" cy="13" r="3.3" fill="#f2f2f2"/><circle cx="35" cy="66" r="3.3" fill="#f2f2f2"/><path d="M60 35 L66 39.5 L60 44 Z" fill="#f2f2f2"/></svg>
<div class="t" style="left:736px;top:388px;font-size:10px;color:#ececec"><i style="margin-right:-3.60px">각도</i>:</div>
<div class="inp" style="left:760px;top:384px;width:56px;height:16px;background:#444;border-color:#5c5c5c;border-radius:0"></div>
<div class="t" style="left:764px;top:387px;font-size:10.5px;color:#f4f4f4">0°</div>
<div class="t" style="left:729px;top:412px;font-size:10px;color:#ececec"><i style="margin-right:-5.40px">원형율</i>:</div>
<div class="inp" style="left:760px;top:409px;width:56px;height:16px;background:#444;border-color:#5c5c5c;border-radius:0"></div>
<div class="t" style="left:764px;top:412px;font-size:10.5px;color:#f4f4f4">100%</div>
<div class="t" style="left:712px;top:436px;font-size:10px;color:#ececec"><i style="margin-right:-3.60px">경도</i></div>
<div class="inp" style="left:843px;top:435px;width:55px;height:16px;background:#444;border-color:#5c5c5c;border-radius:0"></div>
<div class="t" style="left:847px;top:438px;font-size:10.5px;color:#f4f4f4">0%</div>
<div class="a" style="left:717px;top:458px;width:176px;height:3px;background:#6e6e6e;border-radius:1px"></div>
<svg style="left:709px;top:460px" width="13" height="13" viewBox="0 0 13 13"><path d="M6.5 0.9 L11.6 7.4 V10.4 Q11.6 12.1 10 12.1 H3 Q1.4 12.1 1.4 10.4 V7.4 Z" fill="#f6f6f6" stroke="#1a1a1a" stroke-width="1.35" stroke-linejoin="round"/></svg>
<div class="a" style="left:712px;top:479px;width:10px;height:10px;background:#f0f0f0;border-radius:2px"></div><svg style="left:712px;top:479px" width="10" height="10" viewBox="0 0 10 10"><path d="M2.2 5.2 L4.2 7.3 L7.9 2.6" fill="none" stroke="#1a1a1a" stroke-width="1.6"/></svg>
<div class="t" style="left:729px;top:479px;font-size:10px;color:#ececec"><i style="margin-right:-3.60px">간격</i></div>
<div class="inp" style="left:843px;top:476px;width:55px;height:16px;background:#444;border-color:#5c5c5c;border-radius:0"></div>
<div class="t" style="left:847px;top:479px;font-size:10.5px;color:#f4f4f4">25%</div>
<div class="a" style="left:717px;top:499px;width:176px;height:3px;background:#6e6e6e;border-radius:1px"></div>
<svg style="left:731px;top:501px" width="13" height="13" viewBox="0 0 13 13"><path d="M6.5 0.9 L11.6 7.4 V10.4 Q11.6 12.1 10 12.1 H3 Q1.4 12.1 1.4 10.4 V7.4 Z" fill="#f6f6f6" stroke="#1a1a1a" stroke-width="1.35" stroke-linejoin="round"/></svg>
<div class="a" style="left:603px;top:550px;width:295px;height:102px;background:#6b6b6b;border:1px solid #5c5c5c"></div>
<svg style="left:603px;top:550px;overflow:hidden" width="295" height="102" viewBox="0 0 295 102"><defs><filter id="sb" filterUnits="userSpaceOnUse" x="-20" y="-20" width="335" height="142"><feGaussianBlur stdDeviation="7.5"/></filter></defs>
<path d="M28 52 C45 38 65 33 86 35 C110 37 125 50 147 56 C170 63 190 67 209 65 C235 63 250 58 260 55" fill="none" stroke="#fff" stroke-width="40" stroke-linecap="round" filter="url(#sb)"/>
</svg>
<div class="a" style="left:599px;top:657px;width:304px;height:1px;background:#3e3e3e"></div>
<svg style="left:865px;top:664px" width="12" height="12" viewBox="0 0 12 12"><rect x="0.7" y="0.7" width="10.6" height="10.6" rx="1" fill="none" stroke="#e0e0e0" stroke-width="1.2"/><path d="M6 3 V9 M3 6 H9" stroke="#e0e0e0" stroke-width="1.2"/></svg>
<div class="a" style="left:599px;top:683px;width:304px;height:7px;background:#454545"></div>
<!-- dock -->
<div class="a" style="left:903px;top:54px;width:297px;height:721px;background:#404040"></div><div class="a" style="left:903px;top:54px;width:2px;height:721px;background:#383838"></div>
<svg style="left:926px;top:57px" width="8" height="7" viewBox="0 0 8 7"><path d="M3.5 1 L1.2 3.5 L3.5 6 M7 1 L4.7 3.5 L7 6" fill="none" stroke="#e0e0e0" stroke-width="1.3"/></svg>
<svg style="left:1186px;top:57px" width="8" height="7" viewBox="0 0 8 7"><path d="M1 1 L3.3 3.5 L1 6 M4.5 1 L6.8 3.5 L4.5 6" fill="none" stroke="#e0e0e0" stroke-width="1.3"/></svg>
<!-- tools strip -->
<div class="a" style="left:905px;top:67px;width:33px;height:708px;background:#515151"></div>
<div class="a" style="left:909px;top:67px;width:29px;height:69px;background:#555555"></div>
<div class="a" style="left:912px;top:71px;width:22px;height:2px;background:#5c5c5c"></div>
<div class="a" style="left:905px;top:136px;width:33px;height:1px;background:#424242"></div>
<div class="a" style="left:909px;top:137px;width:29px;height:13px;background:#4f4f4f"></div>
<div class="a" style="left:912px;top:142px;width:22px;height:2px;background:#595959"></div>
<div class="a" style="left:905px;top:150px;width:33px;height:1px;background:#424242"></div>
<!-- history icon -->
<svg style="left:914px;top:80px" width="16" height="20" viewBox="0 0 16 20">
<rect x="1" y="1" width="5" height="5" fill="#e8e8e8"/><rect x="2.7" y="2.7" width="1.6" height="1.6" fill="#111"/>
<rect x="1" y="7.5" width="5" height="5" fill="#e8e8e8"/><rect x="2.7" y="9.2" width="1.6" height="1.6" fill="#111"/>
<rect x="1" y="13.8" width="5" height="5" fill="#dcdcdc"/>
<path d="M9 17 Q14.5 12 12 5" fill="none" stroke="#e8e8e8" stroke-width="1.5"/>
<path d="M8.5 5.5 L11.5 2 L14.5 5.2 Z" fill="#e8e8e8"/>
</svg>
<!-- comment icon -->
<svg style="left:914px;top:110px" width="16" height="17" viewBox="0 0 16 17">
<path d="M1.5 1 H13.5 Q14.5 1 14.5 2 V10 Q14.5 11 13.5 11 H7 L3.2 15.8 L4 11 H1.5 Q0.5 11 0.5 10 V2 Q0.5 1 1.5 1 Z" fill="#e6e6e6"/>
</svg>
<div class="a" style="left:938px;top:67px;width:3px;height:708px;background:#3a3a3a"></div>

<!-- color panel -->
<div class="a" style="left:941px;top:67px;width:259px;height:29px;background:#444444"></div>
<div class="a" style="left:941px;top:67px;width:33px;height:29px;background:#535353"></div>
<div class="a" style="left:1025px;top:67px;width:1px;height:29px;background:#3c3c3c"></div>
<div class="a" style="left:1090px;top:67px;width:1px;height:29px;background:#3c3c3c"></div>
<div class="a" style="left:1124px;top:67px;width:1px;height:29px;background:#3c3c3c"></div>
<div class="t" style="left:948px;top:75px;font-size:10px;color:#f0f0f0;font-weight:bold"><i style="margin-right:-3.60px">색상</i></div>
<div class="t" style="left:982px;top:75px;font-size:10px;color:#c8c8c8"><i style="margin-right:-7.70px">색상 견본</i></div>
<div class="t" style="left:1034px;top:75px;font-size:10px;color:#c8c8c8"><i style="margin-right:-10.80px">그레이디언트</i></div>
<div class="t" style="left:1099px;top:75px;font-size:10px;color:#c8c8c8"><i style="margin-right:-3.60px">패턴</i></div>
<div class="a" style="left:1184px;top:76px;width:12px;height:10px;border-radius:1px;background:repeating-linear-gradient(#b8b8b8 0 1px,#8c8c8c 1px 2.2px)"></div>
<div class="a" style="left:941px;top:96px;width:259px;height:138px;background:#535353"></div>
<div class="a" style="left:958px;top:116px;width:18px;height:20px;background:#fff;border:1px solid #9a9a9a;border-radius:1px"></div>
<div class="a" style="left:948px;top:104px;width:20px;height:24px;background:#000;border:2px solid #d8d8d8;outline:1px solid #5a5a5a"></div>
<div class="a" style="left:982px;top:103px;width:170px;height:114px;background:linear-gradient(to bottom,rgba(0,0,0,0),#000),linear-gradient(to right,#fff,#f00)"></div>
<div class="a" style="left:1168px;top:103px;width:16px;height:114px;background:linear-gradient(to bottom,#f00 0%,#f0f 16.6%,#00f 33.3%,#0ff 50%,#0f0 66.6%,#ff0 83.3%,#f00 100%)"></div>
<svg style="left:1156px;top:210px" width="10" height="12" viewBox="0 0 10 12"><path d="M1.5 1.5 L8.5 6 L1.5 10.5 Z" fill="#fff" stroke="#222" stroke-width="1.2" stroke-linejoin="round"/></svg>
<div class="a" style="left:941px;top:234px;width:259px;height:3px;background:#3c3c3c"></div>

<!-- properties panel -->
<div class="a" style="left:941px;top:237px;width:259px;height:28px;background:#444444"></div><div class="a" style="left:941px;top:265px;width:259px;height:2px;background:#3e3e3e"></div>
<div class="a" style="left:1184px;top:247px;width:12px;height:10px;border-radius:1px;background:repeating-linear-gradient(#b8b8b8 0 1px,#8c8c8c 1px 2.2px)"></div>
<div class="a" style="left:941px;top:267px;width:259px;height:299px;background:#535353"></div>
<div class="a" style="left:941px;top:300px;width:259px;height:2px;background:#474747"></div>
<div class="a" style="left:941px;top:529px;width:244px;height:1px;background:#464646"></div>
<div class="a" style="left:1185px;top:301px;width:15px;height:240px;background:#4d4d4d"></div>
<div class="a" style="left:1188px;top:305px;width:9px;height:110px;background:#6a6a6a;border-radius:5px"></div>
<svg style="left:946px;top:312px" width="10" height="8" viewBox="0 0 10 8"><path d="M1 2 L5 6 L9 2" fill="none" stroke="#d0d0d0" stroke-width="1.2"/></svg>
<div class="t" style="left:960px;top:311px;font-size:10px;color:#f0f0f0;font-weight:bold"><i style="margin-right:-5.40px">캔버스</i></div>
<div class="t" style="left:985px;top:335px;font-size:11px;color:#e0e0e0">W</div>
<div class="a" style="left:999px;top:333px;width:48px;height:15px;background:#434343;border:1px solid #5a5a5a"></div>
<div class="t" style="left:1003px;top:335px;font-size:11px;color:#f0f0f0">1072 <i style="margin-right:-3.96px">픽셀</i></div>
<div class="t" style="left:1059px;top:335px;font-size:11px;color:#e0e0e0">X</div>
<div class="a" style="left:1071px;top:333px;width:48px;height:15px;background:#4e4e4e;border:1px solid #5c5c5c"></div>
<div class="t" style="left:1074px;top:335px;font-size:10px;color:#777">0 <i style="margin-right:-3.60px">픽셀</i></div>
<div class="t" style="left:987px;top:359px;font-size:11px;color:#e0e0e0">H</div>
<div class="a" style="left:999px;top:357px;width:48px;height:16px;background:#434343;border:1px solid #5a5a5a"></div>
<div class="t" style="left:1003px;top:360px;font-size:11px;color:#f0f0f0">582 <i style="margin-right:-3.96px">픽셀</i></div>
<div class="t" style="left:1059px;top:359px;font-size:11px;color:#e0e0e0">Y</div>
<div class="a" style="left:1071px;top:357px;width:48px;height:16px;background:#4e4e4e;border:1px solid #5c5c5c"></div>
<div class="t" style="left:1074px;top:360px;font-size:10px;color:#777">0 <i style="margin-right:-3.60px">픽셀</i></div>
<svg style="left:957px;top:344px" width="10" height="16" viewBox="0 0 10 16"><rect x="2" y="1" width="6" height="7" rx="3" fill="none" stroke="#d8d8d8" stroke-width="1.2"/><rect x="2" y="8" width="6" height="7" rx="3" fill="none" stroke="#d8d8d8" stroke-width="1.2"/><path d="M5 5 V11" stroke="#d8d8d8" stroke-width="1.2"/></svg>
<div class="a" style="left:1005px;top:389px;width:14px;height:17px;border:1px solid #d0d0d0"></div>
<svg style="left:1005px;top:389px" width="14" height="17" viewBox="0 0 14 17"><circle cx="7" cy="6" r="2" fill="#e0e0e0"/><path d="M4 15 V11 Q4 9 7 9 Q10 9 10 11 V15 Z" fill="#e0e0e0"/></svg>
<div class="a" style="left:1025px;top:385px;width:21px;height:24px;background:#383838"></div>
<div class="a" style="left:1028px;top:390px;width:16px;height:14px;border:1px solid #d0d0d0"></div>
<svg style="left:1028px;top:390px" width="16" height="14" viewBox="0 0 16 14"><circle cx="8" cy="5" r="2" fill="#e0e0e0"/><path d="M5 13 V10 Q5 8 8 8 Q11 8 11 10 V13 Z" fill="#e0e0e0"/></svg>
<div class="t" style="left:1000px;top:422px;font-size:10px;color:#e0e0e0"><i style="margin-right:-5.40px">해상도</i>: 144 <i style="margin-right:-3.60px">픽셀</i>/<i style="margin-right:-3.60px">인치</i></div>
<div class="t" style="left:980px;top:448px;font-size:10px;color:#e0e0e0"><i style="margin-right:-3.60px">모드</i></div>
<div class="a" style="left:1001px;top:445px;width:119px;height:18px;background:#434343;border:1px solid #4c4c4c;border-radius:2px"></div>
<div class="t" style="left:1007px;top:448px;font-size:11px;color:#f0f0f0">RGB <i style="margin-right:-3.96px">색상</i></div>
<svg style="left:1107px;top:450px" width="9" height="7" viewBox="0 0 9 7"><path d="M1 2 L4.5 5.5 L8 2" fill="none" stroke="#e0e0e0" stroke-width="1.3"/></svg>
<div class="a" style="left:1001px;top:471px;width:119px;height:18px;background:#434343;border:1px solid #4c4c4c;border-radius:2px"></div>
<div class="t" style="left:1007px;top:474px;font-size:11px;color:#f0f0f0">8<i style="margin-right:-3.96px">비트</i>/<i style="margin-right:-3.96px">채널</i></div>
<svg style="left:1107px;top:477px" width="9" height="7" viewBox="0 0 9 7"><path d="M1 2 L4.5 5.5 L8 2" fill="none" stroke="#e0e0e0" stroke-width="1.3"/></svg>
<div class="t" style="left:985px;top:504px;font-size:11px;color:#e0e0e0"><i style="margin-right:-1.98px">칠</i></div>
<div class="a" style="left:1000px;top:501px;width:16px;height:18px;background:#4a4a4a;border:1px solid #3d3d3d"></div>
<div class="a" style="left:1021px;top:501px;width:98px;height:18px;background:#4d4d4d;border:1px solid #575757;border-radius:2px"></div>
<div class="t" style="left:1027px;top:505px;font-size:10px;color:#7a7a7a"><i style="margin-right:-5.40px">배경색</i></div>
<svg style="left:1107px;top:507px" width="9" height="7" viewBox="0 0 9 7"><path d="M1 2 L4.5 5.5 L8 2" fill="none" stroke="#666" stroke-width="1.3"/></svg>
<div class="a" style="left:941px;top:566px;width:259px;height:2px;background:#3a3a3a"></div>

<!-- layers panel -->
<div class="a" style="left:941px;top:568px;width:259px;height:29px;background:#444444"></div>
<div class="a" style="left:941px;top:568px;width:40px;height:29px;background:#535353"></div>
<div class="a" style="left:1015px;top:567px;width:1px;height:30px;background:#3c3c3c"></div>
<div class="a" style="left:1049px;top:567px;width:1px;height:30px;background:#3c3c3c"></div>
<div class="t" style="left:948px;top:577px;font-size:10px;color:#f0f0f0;font-weight:bold"><i style="margin-right:-5.40px">레이어</i></div>
<div class="t" style="left:988px;top:577px;font-size:10px;color:#c8c8c8"><i style="margin-right:-3.60px">채널</i></div>
<div class="t" style="left:1022px;top:577px;font-size:10px;color:#c8c8c8"><i style="margin-right:-3.60px">패스</i></div>
<div class="a" style="left:1184px;top:578px;width:12px;height:10px;border-radius:1px;background:repeating-linear-gradient(#b8b8b8 0 1px,#8c8c8c 1px 2.2px)"></div>
<div class="a" style="left:941px;top:597px;width:259px;height:178px;background:#535353"></div>

<!-- layers content -->
<div class="a" style="left:945px;top:607px;width:79px;height:18px;background:#4e4e4e;border:1px solid #575757;border-radius:2px"></div>
<svg style="left:949px;top:610px" width="12" height="12" viewBox="0 0 12 12"><circle cx="4.8" cy="4.8" r="3.6" fill="none" stroke="#bdbdbd" stroke-width="1.3"/><path d="M7.5 7.5 L11 11" stroke="#bdbdbd" stroke-width="1.7"/></svg>
<div class="t" style="left:962px;top:611px;font-size:10px;color:#8a8a8a"><i style="margin-right:-3.60px">종류</i></div>
<svg style="left:1013px;top:613px" width="8" height="6" viewBox="0 0 8 6"><path d="M1 1.5 L4 4.5 L7 1.5" fill="none" stroke="#6e6e6e" stroke-width="1.1"/></svg>
<svg style="left:1033px;top:609px" width="14" height="13" viewBox="0 0 14 13"><rect x="0.7" y="0.7" width="12.6" height="11.6" fill="none" stroke="#aaa" stroke-width="1.2"/><path d="M3 10 L5.5 6 L7 8 L8.5 5.5 L11 10 Z" fill="#aaa"/></svg>
<svg style="left:1055px;top:609px" width="13" height="13" viewBox="0 0 13 13"><circle cx="6.5" cy="6.5" r="5.5" fill="none" stroke="#aaa" stroke-width="1.2"/><path d="M10.4 2.6 A5.5 5.5 0 0 1 2.6 10.4 Z" fill="#aaa"/></svg>
<svg style="left:1077px;top:609px" width="13" height="13" viewBox="0 0 13 13"><path d="M1 2.5 V1 H12 V2.5 M6.5 1 V12 M4.5 12 H8.5" fill="none" stroke="#b0b0b0" stroke-width="1.3"/></svg>
<svg style="left:1098px;top:609px" width="14" height="14" viewBox="0 0 14 14"><rect x="2.5" y="2.5" width="9" height="9" fill="none" stroke="#aaa" stroke-width="1.2"/><rect x="0.5" y="0.5" width="4" height="4" fill="#aaa"/><rect x="9.5" y="0.5" width="4" height="4" fill="#aaa"/><rect x="0.5" y="9.5" width="4" height="4" fill="#aaa"/><rect x="9.5" y="9.5" width="4" height="4" fill="#aaa"/></svg>
<svg style="left:1121px;top:609px" width="12" height="14" viewBox="0 0 12 14"><path d="M4 0.5 H8.5 L11.5 3.5 V10 H4 Z" fill="none" stroke="#aaa" stroke-width="1.1"/><rect x="0.5" y="5.5" width="6" height="8" fill="#aaa"/></svg>
<div class="a" style="left:1143px;top:607px;width:8px;height:18px;background:#464646;border-radius:4px"></div>
<div class="a" style="left:1142px;top:606px;width:10px;height:10px;background:#888;border-radius:5px"></div>
<div class="a" style="left:941px;top:629px;width:259px;height:1px;background:#474747"></div>
<div class="a" style="left:945px;top:636px;width:119px;height:17px;background:#4e4e4e;border:1px solid #575757;border-radius:2px"></div>
<div class="t" style="left:951px;top:640px;font-size:10px;color:#8a8a8a"><i style="margin-right:-3.60px">표준</i></div>
<svg style="left:1053px;top:642px" width="8" height="6" viewBox="0 0 8 6"><path d="M1 1.5 L4 4.5 L7 1.5" fill="none" stroke="#6e6e6e" stroke-width="1.1"/></svg>
<div class="t" style="left:1068px;top:640px;font-size:10px;color:#8a8a8a"><i style="margin-right:-7.20px">불투명도</i>:</div>
<div class="a" style="left:1105px;top:635px;width:33px;height:18px;background:#4e4e4e;border:1px solid #575757"></div>
<div class="t" style="left:1108px;top:639px;font-size:10.5px;color:#7a7a7a">100%</div>
<div class="a" style="left:1138px;top:635px;width:13px;height:18px;background:#4e4e4e;border:1px solid #575757"></div>
<svg style="left:1141px;top:642px" width="8" height="6" viewBox="0 0 8 6"><path d="M1 1.5 L4 4.5 L7 1.5" fill="none" stroke="#6e6e6e" stroke-width="1.1"/></svg>
<div class="a" style="left:941px;top:658px;width:259px;height:1px;background:#474747"></div>
<div class="t" style="left:945px;top:668px;font-size:10px;color:#8a8a8a"><i style="margin-right:-5.40px">잠그기</i>:</div>
<svg style="left:977px;top:667px" width="12" height="12" viewBox="0 0 12 12"><rect x="0.5" y="0.5" width="11" height="11" fill="none" stroke="#bbb"/><g fill="#bbb"><rect x="1" y="1" width="3" height="3"/><rect x="7" y="1" width="3" height="3"/><rect x="4" y="4" width="3" height="3"/><rect x="1" y="7" width="3" height="3"/><rect x="7" y="7" width="3" height="3"/></g></svg>
<svg style="left:997px;top:666px" width="13" height="15" viewBox="0 0 13 15"><path d="M12 1 L6 8" stroke="#bbb" stroke-width="2"/><path d="M5.5 7.5 Q3 8 2.5 10.5 L1 14 Q5 13.5 6 11.5 Q7.5 9.5 5.5 7.5 Z" fill="#bbb"/></svg>
<svg style="left:1016px;top:666px" width="14" height="14" viewBox="0 0 14 14"><path d="M7 1 V13 M1 7 H13" stroke="#bbb" stroke-width="1.2"/><path d="M7 0 L9 2.5 H5 Z M7 14 L9 11.5 H5 Z M0 7 L2.5 5 V9 Z M14 7 L11.5 5 V9 Z" fill="#bbb"/></svg>
<svg style="left:1036px;top:666px" width="15" height="14" viewBox="0 0 15 14"><path d="M3 1 V11 H13 M1 3 H11 V13" fill="none" stroke="#aaa" stroke-width="1.1"/><path d="M11 1 L14 1 L14 4" fill="none" stroke="#aaa" stroke-width="0.9" stroke-dasharray="1 1"/></svg>
<svg style="left:1057px;top:665px" width="11" height="14" viewBox="0 0 11 14"><path d="M2.5 6.5 V4 Q2.5 1 5.5 1 Q8.5 1 8.5 4 V6.5" fill="none" stroke="#bbb" stroke-width="1.3"/><rect x="1" y="6.5" width="9" height="7" fill="#bbb"/></svg>
<div class="t" style="left:1076px;top:668px;font-size:10px;color:#8a8a8a"><i style="margin-right:-5.40px">채우기</i>:</div>
<div class="a" style="left:1105px;top:664px;width:33px;height:18px;background:#4e4e4e;border:1px solid #575757"></div>
<div class="t" style="left:1108px;top:668px;font-size:10.5px;color:#7a7a7a">100%</div>
<div class="a" style="left:1138px;top:664px;width:13px;height:18px;background:#4e4e4e;border:1px solid #575757"></div>
<svg style="left:1141px;top:671px" width="8" height="6" viewBox="0 0 8 6"><path d="M1 1.5 L4 4.5 L7 1.5" fill="none" stroke="#6e6e6e" stroke-width="1.1"/></svg>
<div class="a" style="left:941px;top:689px;width:245px;height:29px;background:#585858"></div>
<div class="a" style="left:969px;top:689px;width:217px;height:29px;background:#6b6b6b"></div>
<div class="a" style="left:1186px;top:689px;width:11px;height:86px;background:#4d4d4d"></div>
<svg style="left:947px;top:699px" width="16" height="11" viewBox="0 0 16 11"><path d="M1 5.5 Q8 -1.5 15 5.5 Q8 12.5 1 5.5 Z" fill="#f2f2f2"/><circle cx="8" cy="5.5" r="2.6" fill="#333"/></svg>
<div class="a" style="left:972px;top:694px;width:29px;height:20px;background:#1e1a32"></div>
<div class="a" style="left:973px;top:695px;width:27px;height:18px;background:linear-gradient(160deg,#e872ee,#e644ee)"></div>
<svg style="left:973px;top:695px;overflow:hidden" width="27" height="18" viewBox="0 0 29 21"><path d="M0 10 Q3 8 6 8.5 Q9 9.5 11 11 Q7 11.5 4 12 Q2 12.5 0 13 Z" fill="#3a4fc8"/><path d="M0 0 H4 Q3 2 0 3 Z" fill="#3a4fc8" opacity="0.8"/><path d="M2 20 Q6 17 10 17 Q8 19 6 21 Z" fill="#8a3ad0" opacity="0.5"/></svg>
<div class="t" style="left:1008px;top:699px;font-size:10px;color:#f4f4f4;font-weight:bold"><i style="margin-right:-3.60px">배경</i></div>
<svg style="left:1159px;top:696px" width="11" height="14" viewBox="0 0 11 14"><path d="M2.5 6.5 V4 Q2.5 1 5.5 1 Q8.5 1 8.5 4 V6.5" fill="none" stroke="#eee" stroke-width="1.2"/><rect x="1" y="6.5" width="9" height="7" rx="0.5" fill="none" stroke="#eee" stroke-width="1.2"/><rect x="4.8" y="9" width="1.5" height="1.6" fill="#eee"/></svg>

<!-- popup menu -->
<div class="a" style="left:895px;top:151px;width:160px;height:142px;background:#323232;border:1px solid #505050;border-radius:6px;box-shadow:0 3px 8px rgba(0,0,0,0.35)"></div>
<div class="t" style="left:916px;top:159px;font-size:12px;color:#f0f0f0;transform:scaleX(0.86);transform-origin:0 0;-webkit-text-stroke:0.35px #f0f0f0">새 브러시 사전 설정...</div>
<div class="a" style="left:904px;top:180px;width:142px;height:1px;background:#555"></div>
<div class="t" style="left:916px;top:187px;font-size:12px;color:#f0f0f0;transform:scaleX(0.86);transform-origin:0 0;-webkit-text-stroke:0.35px #f0f0f0">브러시 컨트롤 지우기</div>
<div class="t" style="left:916px;top:205px;font-size:12px;color:#f0f0f0;transform:scaleX(0.86);transform-origin:0 0;-webkit-text-stroke:0.35px #f0f0f0">잠긴 설정 모두 재설정</div>
<div class="t" style="left:916px;top:223px;font-size:12px;color:#6e6e6e;transform:scaleX(0.86);transform-origin:0 0">다른 도구에 텍스처 복사</div>
<div class="a" style="left:904px;top:246px;width:142px;height:1px;background:#555"></div>
<div class="t" style="left:916px;top:253px;font-size:12px;color:#f0f0f0;transform:scaleX(0.86);transform-origin:0 0;-webkit-text-stroke:0.35px #f0f0f0">닫기</div>
<div class="t" style="left:916px;top:271px;font-size:12px;color:#f0f0f0;transform:scaleX(0.86);transform-origin:0 0;-webkit-text-stroke:0.35px #f0f0f0">탭 그룹 닫기</div>
</body></html>
